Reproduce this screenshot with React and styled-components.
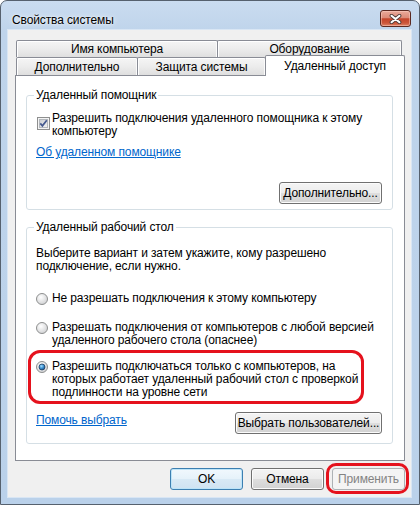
import React from "react";
import styled, { createGlobalStyle, css } from "styled-components";

const FONT = `"Liberation Sans", Arial, sans-serif`;
const TRACK = "-0.12px";

const GlobalStyle = createGlobalStyle`
  html, body { margin: 0; padding: 0; background: #ffffff; }
  body { font-family: ${FONT}; font-size: 12px; color: #000; letter-spacing: ${TRACK}; }
  * { box-sizing: border-box; }
`;

const Window = styled.div`
  width: 420px;
  height: 505px;
  border: 1px solid #56616e;
  border-radius: 7px 7px 0 0;
  background: linear-gradient(180deg, #cadcf0 0px, #bfd4eb 30px, #bad1ea 100%);
  padding: 0 8px 7px 7px;
  display: flex;
  flex-direction: column;
  overflow: hidden;
`;

const TitleBar = styled.div`
  height: 29px;
  flex: none;
  display: flex;
  justify-content: space-between;
  align-items: flex-start;
`;

const Caption = styled.div`
  margin: 12px 0 0 4px;
  line-height: 14px;
  font-size: 12px;
  white-space: nowrap;
  text-shadow: 0 0 6px rgba(255, 255, 255, 0.95), 0 0 2px rgba(255, 255, 255, 0.8);
`;

const CloseButton = styled.button`
  margin: 9px 0 0 0;
  width: 31px;
  height: 17px;
  padding: 0;
  border: 1px solid #5c2a22;
  border-radius: 3px;
  background: linear-gradient(180deg, #eaaa9b 0%, #dc8b78 45%, #c4452b 52%, #cc563a 80%, #de8468 100%);
  box-shadow: inset 0 0 0 1px rgba(255, 215, 205, 0.45);
  display: flex;
  align-items: center;
  justify-content: center;
`;

const Client = styled.div`
  flex: 1;
  min-height: 0;
  background: #f0f0f0;
  padding: 10px 6px 7px 7px;
  display: flex;
  flex-direction: column;
  outline: 1px solid #d9e6f4;
`;

const TabRows = styled.div`
  flex: none;
  display: flex;
  flex-direction: column;
  padding-left: 1px;
`;

const TabRow = styled.div`
  display: flex;
  align-items: flex-end;
  height: ${(p) => p.$h}px;
`;

const Tab = styled.div`
  width: ${(p) => p.$w}px;
  height: ${(p) => p.$h}px;
  margin-left: -1px;
  &:first-child { margin-left: 0; }
  border: 1px solid #898c95;
  border-bottom: none;
  border-radius: 2px 2px 0 0;
  background: linear-gradient(180deg, #f5f5f5 0%, #ececec 50%, #dfdfdf 100%);
  box-shadow: inset 1px 1px 0 #ffffff, inset -1px 0 0 #fbfbfb;
  display: flex;
  align-items: center;
  justify-content: center;
  line-height: 14px;
  white-space: nowrap;
  ${(p) =>
    p.$active &&
    css`
      position: relative;
      z-index: 1;
      margin-top: -2px;
      margin-bottom: -1px;
      background: #ffffff;
      box-shadow: none;
      padding-bottom: 1px;
    `}
`;

const Panel = styled.div`
  flex: 1;
  min-height: 0;
  background: #ffffff;
  border: 1px solid #898c95;
  padding: 12px 11px 0 10px;
  display: flex;
  flex-direction: column;
`;

const GroupBox = styled.fieldset`
  margin: ${(p) => p.$mt || 0}px 0 0 0;
  padding: 0 10px ${(p) => p.$pb}px 9px;
  border: 1px solid #d5dfe5;
  border-radius: 3px;
  display: flex;
  flex-direction: column;
  min-width: 0;
`;

const GroupTitle = styled.legend`
  padding: 0 2px;
  margin-left: -2px;
  line-height: 14px;
  white-space: nowrap;
`;

const TextBlock = styled.div`
  margin-top: ${(p) => p.$mt || 0}px;
  line-height: 13px;
  white-space: nowrap;
`;

const Line = styled.span`
  display: block;
`;

const OptionRow = styled.div`
  display: flex;
  align-items: flex-start;
  margin-top: ${(p) => p.$mt || 0}px;
`;

const CheckGlyph = styled.svg`
  flex: none;
  margin: 5px 2px 0 1px;
`;

const RadioGlyph = styled.svg`
  flex: none;
  margin: 1px 4px 0 0;
`;

const Highlight = styled.div`
  border: 3px solid #e5121d;
  border-radius: 12px;
  width: 336px;
  margin: 3px 0 0 -8px;
  padding: 7px 0 2px 5px;
`;

const Link = styled.a`
  color: #0066cc;
  text-decoration: underline;
  line-height: 13px;
  white-space: nowrap;
  align-self: flex-start;
  margin-top: ${(p) => p.$mt || 0}px;
  cursor: pointer;
`;

const Button = styled.button`
  flex: none;
  width: ${(p) => p.$w}px;
  height: 22px;
  padding: 0;
  font-family: ${FONT};
  font-size: 12px;
  letter-spacing: ${TRACK};
  white-space: nowrap;
  color: #000;
  border: 1px solid #707070;
  border-radius: 3px;
  background: linear-gradient(180deg, #f4f4f4 0%, #ececec 48%, #dedede 52%, #d2d2d2 100%);
  box-shadow: inset 0 0 0 1px #fbfbfb;
  margin-top: ${(p) => p.$mt || 0}px;
  align-self: ${(p) => p.$align || "auto"};
  ${(p) =>
    p.$default &&
    css`
      border-color: #3c7fb1;
      background: linear-gradient(180deg, #f1f8fd 0%, #e6f2fa 48%, #d8e9f5 52%, #cfe3f2 100%);
      box-shadow: inset 0 0 0 1px #bde4f8;
    `}
  &:disabled {
    border-color: #adb2b5;
    background: #f4f4f4;
    color: #838383;
    box-shadow: none;
  }
`;

const UserRow = styled.div`
  display: flex;
  justify-content: space-between;
  align-items: flex-start;
  margin-top: 8px;
`;

const ButtonBar = styled.div`
  flex: none;
  display: flex;
  justify-content: flex-end;
  align-items: flex-start;
  gap: 8px;
  margin-top: 7px;
`;

const ButtonRing = styled.div`
  border: 3px solid #e5121d;
  border-radius: 10px;
  margin: -5px -4px -4px -6px;
  padding: 2px 1px 1px 3px;
  display: flex;
`;

function CloseIcon() {
  return (
    <svg width="13" height="10" viewBox="0 0 13 10">
      <path d="M2.5 1.8 L10.5 8.2 M10.5 1.8 L2.5 8.2" stroke="#4e3c39" strokeWidth="3.8" strokeLinecap="round" />
      <path d="M2.5 1.8 L10.5 8.2 M10.5 1.8 L2.5 8.2" stroke="#ffffff" strokeWidth="2.1" strokeLinecap="round" />
    </svg>
  );
}

function Checkbox() {
  return (
    <CheckGlyph width="13" height="13" viewBox="0 0 13 13">
      <defs>
        <linearGradient id="cbg" x1="0" y1="0" x2="1" y2="1">
          <stop offset="0" stopColor="#c9ccd1" />
          <stop offset="1" stopColor="#f4f4f4" />
        </linearGradient>
      </defs>
      <rect x="0.5" y="0.5" width="12" height="12" fill="#f4f4f4" stroke="#8e8f8f" />
      <rect x="2.5" y="2.5" width="8" height="8" fill="url(#cbg)" stroke="#b4b8bd" />
      <path d="M3.3 6.4 L5.4 8.8 L9.8 3.2" fill="none" stroke="#45598f" strokeWidth="1.7" />
    </CheckGlyph>
  );
}

function Radio({ checked }) {
  return (
    <RadioGlyph width="12" height="12" viewBox="0 0 12 12">
      <defs>
        <radialGradient id="rbg" cx="0.4" cy="0.35" r="0.7">
          <stop offset="0" stopColor="#ffffff" />
          <stop offset="1" stopColor="#cfd0d2" />
        </radialGradient>
        <radialGradient id="rdot" cx="0.4" cy="0.35" r="0.75">
          <stop offset="0" stopColor="#a6e0ff" />
          <stop offset="0.5" stopColor="#3a8fd0" />
          <stop offset="1" stopColor="#10406e" />
        </radialGradient>
      </defs>
      <circle cx="6" cy="6" r="5.5" fill="url(#rbg)" stroke="#8e8f8f" />
      {checked && <circle cx="6" cy="6" r="3" fill="url(#rdot)" stroke="#1f3f63" strokeWidth="0.8" />}
    </RadioGlyph>
  );
}

function Lines({ lines }) {
  return lines.map((l) => <Line key={l}>{l}</Line>);
}

export default function App() {
  return (
    <>
      <GlobalStyle />
      <Window>
        <TitleBar>
          <Caption>Свойства системы</Caption>
          <CloseButton aria-label="Закрыть">
            <CloseIcon />
          </CloseButton>
        </TitleBar>
        <Client>
          <TabRows>
            <TabRow $h={17}>
              <Tab $w={202} $h={17}>Имя компьютера</Tab>
              <Tab $w={185} $h={17}>Оборудование</Tab>
            </TabRow>
            <TabRow $h={18}>
              <Tab $w={122} $h={18}>Дополнительно</Tab>
              <Tab $w={129} $h={18}>Защита системы</Tab>
              <Tab $w={140} $h={21} $active>Удаленный доступ</Tab>
            </TabRow>
          </TabRows>
          <Panel>
            <GroupBox $pb={5}>
              <GroupTitle>Удаленный помощник</GroupTitle>
              <OptionRow $mt={10}>
                <Checkbox />
                <TextBlock>
                  <Lines lines={["Разрешить подключения удаленного помощника к этому", "компьютеру"]} />
                </TextBlock>
              </OptionRow>
              <Link $mt={8}>Об удаленном помощнике</Link>
              <Button $w={103} $mt={23} $align="flex-end">Дополнительно...</Button>
            </GroupBox>
            <GroupBox $mt={10} $pb={9}>
              <GroupTitle>Удаленный рабочий стол</GroupTitle>
              <TextBlock $mt={13}>
                <Lines lines={["Выберите вариант и затем укажите, кому разрешено", "подключение, если нужно."]} />
              </TextBlock>
              <OptionRow $mt={19}>
                <Radio />
                <TextBlock>Не разрешать подключения к этому компьютеру</TextBlock>
              </OptionRow>
              <OptionRow $mt={16}>
                <Radio />
                <TextBlock>
                  <Lines lines={["Разрешать подключения от компьютеров с любой версией", "удаленного рабочего стола (опаснее)"]} />
                </TextBlock>
              </OptionRow>
              <Highlight>
                <OptionRow>
                  <Radio checked />
                  <TextBlock>
                    <Lines
                      lines={[
                        "Разрешить подключаться только с компьютеров, на",
                        "которых работает удаленный рабочий стол с проверкой",
                        "подлинности на уровне сети",
                      ]}
                    />
                  </TextBlock>
                </OptionRow>
              </Highlight>
              <UserRow>
                <Link $mt={2}>Помочь выбрать</Link>
                <Button $w={147}>Выбрать пользователей...</Button>
              </UserRow>
            </GroupBox>
          </Panel>
          <ButtonBar>
            <Button $w={73} $default>OK</Button>
            <Button $w={73}>Отмена</Button>
            <ButtonRing>
              <Button $w={73} disabled>Применить</Button>
            </ButtonRing>
          </ButtonBar>
        </Client>
      </Window>
    </>
  );
}
